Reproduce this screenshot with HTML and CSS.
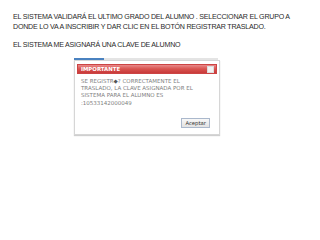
FILE: index.html
```html
<!DOCTYPE html>
<html>
<head>
<meta charset="utf-8">
<link rel="stylesheet" href="styles.css">
</head>
<body>
<div class="slide">
  <p class="line">EL SISTEMA VALIDARÁ EL ULTIMO GRADO DEL ALUMNO . SELECCIONAR EL GRUPO A<br>DONDE LO VA A INSCRIBIR Y DAR CLIC EN EL BOTÓN REGISTRAR TRASLADO.</p>
  <p class="line second">EL SISTEMA ME ASIGNARÁ UNA CLAVE DE ALUMNO</p>
  <div class="shot">
    <div class="tabs"><span class="tab-on"></span></div>
    <div class="dialog">
      <div class="head"><span class="title">IMPORTANTE</span><span class="close"></span></div>
      <div class="msg">SE REGISTR<span class="q">◆</span>? CORRECTAMENTE EL<br>TRASLADO, LA CLAVE ASIGNADA POR EL<br>SISTEMA PARA EL ALUMNO ES<br>:10533142000049</div>
      <div class="foot"><span class="btn">Aceptar</span></div>
    </div>
  </div>
</div>
</body>
</html>
```

FILE: styles.css
```css
html, body { margin: 0; padding: 0; background: #fff; }
.slide { width: 320px; height: 240px; padding: 12px 0 0 13px; box-sizing: border-box; font-family: "Liberation Sans", Arial, sans-serif; }
.line { margin: 0; font-size: 7.1px; line-height: 10px; color: #2a2a2a; letter-spacing: -0.23px; }
.second { margin-top: 8px; }
.shot { margin: 8px 0 0 61px; width: 146px; }
.tabs { height: 2px; background: #e4e4e4; width: 144px; display: flex; }
.tab-on { width: 30px; background: #4a82c0; }
.dialog { border: 1px solid #d6d6d6; box-shadow: 0 1px 1px #cfcfcf; padding: 3px 2px 6px 2px; height: 64px; display: flex; flex-direction: column; background: #fff; }
.head { height: 10px; background: linear-gradient(#e88a8a 0%, #d9534f 50%, #c83a3a 100%); border: 1px solid #c44; box-sizing: border-box; display: flex; align-items: center; justify-content: space-between; padding: 0 2px 0 3px; }
.title { color: #fff; font-family: "DejaVu Sans", Verdana, sans-serif; font-weight: bold; font-size: 5.4px; }
.close { width: 5px; height: 5px; background: #f3f3f3; border: 1px solid #ddd; }
.msg { margin: 4px 0 0 4px; font-family: "DejaVu Sans", Verdana, sans-serif; font-size: 5.5px; line-height: 7.2px; color: #808080; }
.q { color: #555; }
.foot { flex: 1; display: flex; justify-content: flex-end; align-items: flex-end; padding-right: 7px; }
.btn { font-family: "DejaVu Sans", Verdana, sans-serif; font-size: 5.3px; color: #333; background: linear-gradient(#f8f8f8, #e2e2e2); border: 1px solid #aab8cc; padding: 1px 3px; line-height: 6px; }
```
